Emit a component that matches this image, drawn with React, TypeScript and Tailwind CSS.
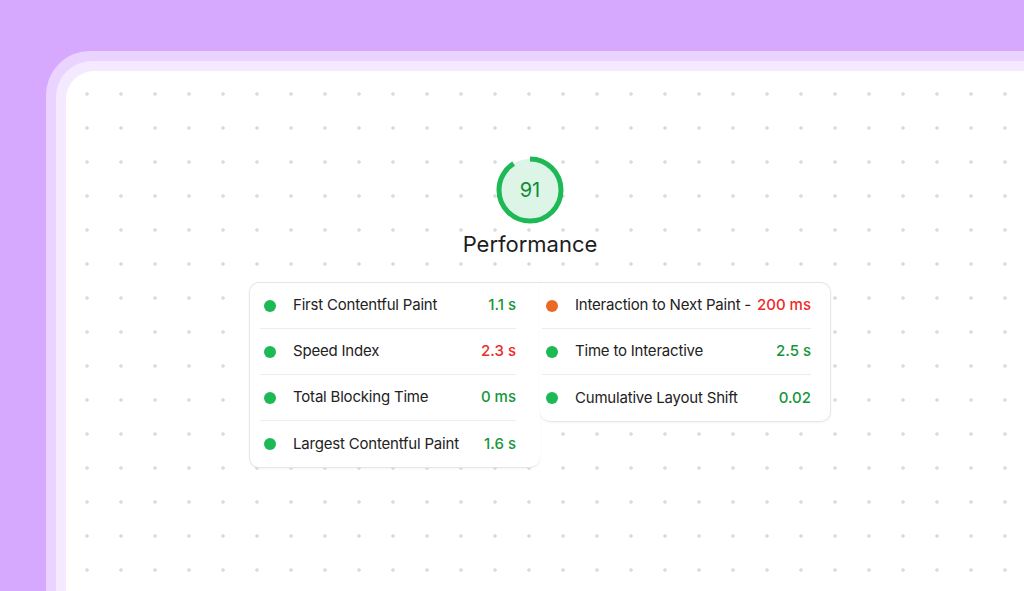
const left = [
  { label: "First Contentful Paint", value: "1.1 s", good: true },
  { label: "Speed Index", value: "2.3 s", good: false },
  { label: "Total Blocking Time", value: "0 ms", good: true },
  { label: "Largest Contentful Paint", value: "1.6 s", good: true },
];

const right = [
  { label: "Interaction to Next Paint -", value: "200 ms", good: false, dot: "bg-[#ea6a25]" },
  { label: "Time to Interactive", value: "2.5 s", good: true },
  { label: "Cumulative Layout Shift", value: "0.02", good: true },
];

function Row({
  label,
  value,
  good,
  dot,
  last,
}: {
  label: string;
  value: string;
  good: boolean;
  dot?: string;
  last?: boolean;
}) {
  return (
    <div className={`flex h-[46px] items-center ${last ? "" : "border-b border-[#ececec]"}`}>
      <span className={`mr-[17px] ml-[4px] size-[12px] shrink-0 rounded-full ${dot ?? "bg-[#1db954]"}`} />
      <span className="flex-1 whitespace-nowrap text-[15px] tracking-[-0.2px] text-[#222]">{label}</span>
      <span className={`whitespace-nowrap text-[15px] font-medium ${good ? "text-[#15963a]" : "text-[#ee2a2a]"}`}>{value}</span>
    </div>
  );
}

function Gauge() {
  const r = 31;
  const c = 2 * Math.PI * r;
  return (
    <svg width="70" height="70" viewBox="0 0 70 70">
      <circle cx="35" cy="35" r={r} fill="#dcf5e6" />
      <circle
        cx="35"
        cy="35"
        r={r}
        fill="none"
        stroke="#1cb954"
        strokeWidth="5"
        strokeDasharray={`${c * 0.91} ${c}`}
        transform="rotate(-90 35 35)"
      />
      <text x="35" y="42" textAnchor="middle" fontSize="20" fill="#148a37" fontFamily="Inter, sans-serif">
        91
      </text>
    </svg>
  );
}

export default function App() {
  return (
    <div className="h-[591px] w-[1024px] overflow-hidden bg-[#d6a9ff] pt-[51px] pl-[46px] [font-family:Inter,sans-serif]">
      <div className="h-[600px] rounded-tl-[44px] bg-[#ead3ff] pt-[10px] pl-[10px]">
        <div className="h-[600px] rounded-tl-[36px] bg-[#f5e9ff] pt-[10px] pl-[10px]">
          <div
            className="flex h-[600px] flex-col items-center rounded-tl-[28px] bg-white bg-[radial-gradient(circle,#dcdce2_1.5px,transparent_2px)] bg-[length:34px_34px] bg-[position:4px_6px] pt-[84px] pr-[30px]"
          >
            <Gauge />
            <div className="mt-[3px] text-[22px] text-[#1d1d1d]">Performance</div>
            <div className="mt-[21px] ml-[55px] flex items-start self-start pl-[128px]">
              <div className="w-[291px] rounded-l-[10px] rounded-br-[10px] border border-r-0 border-[#e6e6e6] bg-white pr-[24px] pl-[10px] shadow-[0_1px_3px_rgba(0,0,0,0.04)]">
                {left.map((r, i) => (
                  <Row key={r.label} {...r} last={i === left.length - 1} />
                ))}
              </div>
              <div className="w-[291px] rounded-r-[10px] rounded-bl-[10px] border border-l-0 border-[#e6e6e6] bg-white pr-[19px] pl-[2px] shadow-[0_1px_3px_rgba(0,0,0,0.04)]">
                {right.map((r, i) => (
                  <Row key={r.label} {...r} last={i === right.length - 1} />
                ))}
              </div>
            </div>
          </div>
        </div>
      </div>
    </div>
  );
}
